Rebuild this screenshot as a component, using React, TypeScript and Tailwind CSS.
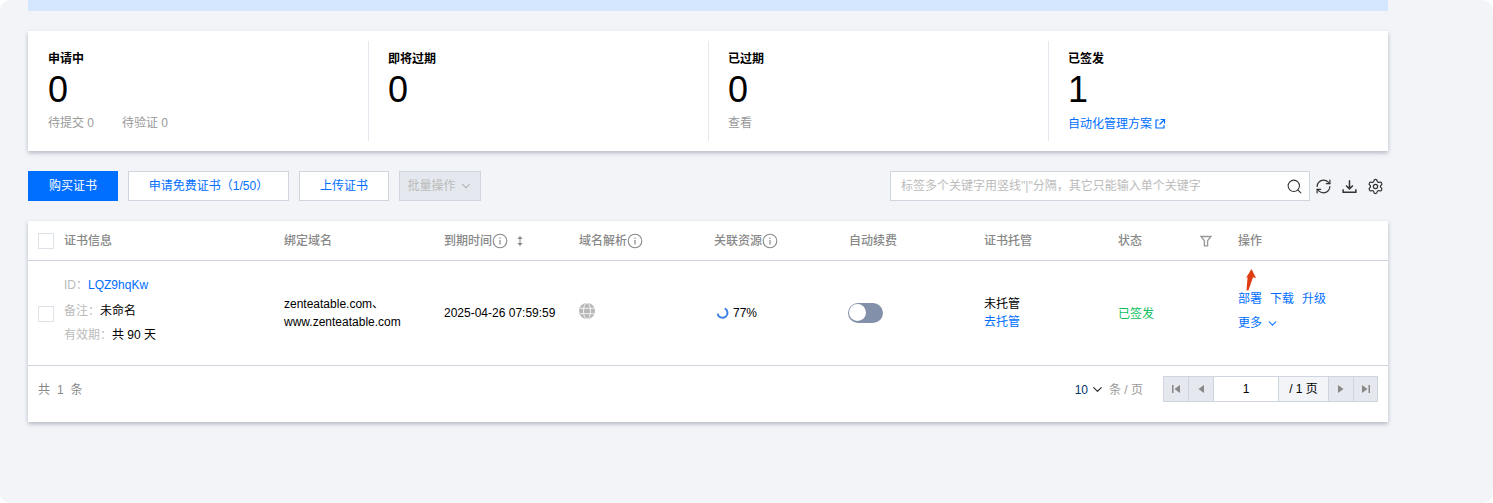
import React from "react";
import { ChevronDown, Search, RefreshCw, Settings } from "lucide-react";

const FONT = "font-['Liberation_Sans','Noto_Sans_CJK_SC',sans-serif]";
const GRID = "grid grid-cols-[246px_160px_135px_135px_135px_135px_134px_120px_160px]";

function Info() {
  return (
    <svg width="16" height="16" viewBox="0 0 16 16" fill="none" className="shrink-0">
      <circle cx="8" cy="8" r="6.8" stroke="#888888" strokeWidth="1.1" />
      <rect x="7.4" y="7" width="1.2" height="4.5" fill="#888888" />
      <rect x="7.4" y="4.5" width="1.2" height="1.3" fill="#888888" />
    </svg>
  );
}

function Stat({ title, value, children, first }: { title: string; value: string; children: React.ReactNode; first?: boolean }) {
  return (
    <div className={`h-[100px] ${first ? "pl-5" : "pl-[19px] border-l border-[#e5e8ee]"}`}>
      <div className="mt-[9px] text-xs leading-[18px] font-bold text-black">{title}</div>
      <div className="text-[36px] leading-[44px] text-black">{value}</div>
      <div className="mt-[1px] text-xs leading-[20px] text-[#999999] flex">{children}</div>
    </div>
  );
}

function HeadCell({ children, info }: { children: React.ReactNode; info?: boolean }) {
  return (
    <div className="px-[10px] flex items-center text-xs font-medium text-[#888888]">
      <span>{children}</span>
      {info && <Info />}
    </div>
  );
}

function PageBtn({ d, className }: { d: string; className: string }) {
  return (
    <div className={`h-full bg-[#e5e8ee] flex items-center justify-center ${className}`}>
      <svg width="12" height="12" viewBox="0 0 12 12" fill="#888888"><path d={d} /></svg>
    </div>
  );
}

export default function App() {
  return (
    <div className={`${FONT} w-[1493px] h-[503px] bg-white overflow-hidden`}>
      <div className="h-full rounded-[10px] bg-[#f2f4f8] pl-7 w-[1493px]">
        <div className="w-[1360px]">
          <div className="h-[11px] bg-[#d5e7ff]" />

          <div className="mt-5 h-[120px] bg-white py-[10px] grid grid-cols-4 shadow-[0_2px_4px_rgba(54,58,80,0.32)]">
            <Stat title="申请中" value="0" first>
              <span className="w-[74px]">待提交 0</span>
              <span>待验证 0</span>
            </Stat>
            <Stat title="即将过期" value="0"><span /></Stat>
            <Stat title="已过期" value="0"><span>查看</span></Stat>
            <Stat title="已签发" value="1">
              <span className="text-[#006eff] flex items-center gap-[2px] mt-[1px]">
                自动化管理方案
                <svg width="12" height="12" viewBox="0 0 12 12" fill="none" stroke="#006eff" strokeWidth="1.2">
                  <path d="M5 2H2v8h8V7" />
                  <path d="M6.5 1.5h4v4M10.5 1.5 5.5 6.5" />
                </svg>
              </span>
            </Stat>
          </div>

          <div className="mt-5 h-[30px] flex items-center text-xs">
            <button className="w-[90px] h-[30px] bg-[#006eff] text-white">购买证书</button>
            <button className="ml-[10px] w-[161px] h-[30px] bg-white border border-[#cfd5de] text-[#006eff]">申请免费证书（1/50）</button>
            <button className="ml-[10px] w-[90px] h-[30px] bg-white border border-[#cfd5de] text-[#006eff]">上传证书</button>
            <button className="ml-[10px] w-[82px] h-[30px] bg-[#e5e8ee] border border-[#cfd5de] text-[#bbbbbb] flex items-center justify-center gap-[3px]">
              批量操作
              <ChevronDown size={14} strokeWidth={1.8} color="#aaaaaa" />
            </button>
            <div className="ml-auto w-[420px] h-[30px] bg-white border border-[#cfd5de] flex items-center pl-[10px] pr-[6px]">
              <span className="flex-1 text-[#bbbbbb]">标签多个关键字用竖线"|"分隔，其它只能输入单个关键字</span>
              <Search size={17} strokeWidth={1.5} color="#333333" />
            </div>
            <div className="ml-[5px] mr-[4px] flex items-center gap-[9px]">
              <RefreshCw size={17} strokeWidth={1.7} color="#333333" />
              <svg width="17" height="17" viewBox="0 0 16 16" fill="none" stroke="#333333" strokeWidth="1.4">
                <path d="M8 2v8M4.8 7 8 10.2 11.2 7" />
                <path d="M2 10.5v3h12v-3" />
              </svg>
              <Settings size={17} strokeWidth={1.7} color="#333333" />
            </div>
          </div>

          <div className="mt-5 h-[201px] bg-white shadow-[0_2px_4px_rgba(54,58,80,0.32)] relative">
            <div className={`${GRID} h-10 border-b border-[#cfd5de]`}>
              <div className="px-[10px] flex items-center gap-[10px] text-xs font-medium text-[#888888]">
                <span className="w-4 h-4 border border-[#dde1e8] bg-white" />
                <span>证书信息</span>
              </div>
              <HeadCell>绑定域名</HeadCell>
              <div className="px-[10px] flex items-center text-xs font-medium text-[#888888]">
                <span>到期时间</span>
                <Info />
                <svg width="8" height="12" viewBox="0 0 8 12" fill="#888888" className="ml-[8px]">
                  <path d="M4 1 6.6 4H1.4ZM4 11 1.4 8h5.2ZM3.5 3h1v6h-1Z" />
                </svg>
              </div>
              <HeadCell info>域名解析</HeadCell>
              <HeadCell info>关联资源</HeadCell>
              <HeadCell>自动续费</HeadCell>
              <HeadCell>证书托管</HeadCell>
              <div className="px-[10px] flex items-center justify-between text-xs font-medium text-[#888888]">
                <span>状态</span>
                <svg width="14" height="14" viewBox="0 0 14 14" fill="none" stroke="#999999" strokeWidth="1.3" className="mr-[5px]">
                  <path d="M2 2.5h10L8.6 6.8v5H5.4V6.8Z" />
                </svg>
              </div>
              <HeadCell>操作</HeadCell>
            </div>

            <div className={`${GRID} h-[105px] border-b border-[#cfd5de] text-xs text-black`}>
              <div className="px-[10px] flex items-center gap-[10px]">
                <span className="w-4 h-4 border border-[#dde1e8] bg-white mt-[2px] shrink-0" />
                <div className="leading-[24px] mt-[-7px]">
                  <div className="h-[25px]"><span className="text-[#bbbbbb]">ID：</span><span className="text-[#006eff]">LQZ9hqKw</span></div>
                  <div className="h-[25px] leading-[26px]"><span className="text-[#bbbbbb]">备注：</span>未命名</div>
                  <div className="h-[24px] leading-[24px]"><span className="text-[#bbbbbb]">有效期：</span>共 90 天</div>
                </div>
              </div>
              <div className="px-[10px] flex flex-col justify-center leading-[18px] pb-[1px]">
                <div>zenteatable.com、</div>
                <div>www.zenteatable.com</div>
              </div>
              <div className="px-[10px] flex items-center mb-[1px]">2025-04-26 07:59:59</div>
              <div className="px-[10px] flex items-center pb-[4px]">
                <svg width="16" height="16" viewBox="0 0 16 16">
                  <circle cx="8" cy="8" r="8" fill="#b8b8b8" />
                  <g fill="none" stroke="#ffffff" strokeWidth="0.8">
                    <ellipse cx="8" cy="8" rx="3.5" ry="8" />
                    <path d="M0.7 5.3h14.6M0.7 10.7h14.6" />
                  </g>
                </svg>
              </div>
              <div className="px-[10px] flex items-center gap-[4px]">
                <svg width="14" height="14" viewBox="0 0 14 14" fill="none" className="ml-[2px] mr-[-1px]">
                  <path d="M1.6 7.6A5 5 0 1 0 8.7 2.3" stroke="#3c7fe8" strokeWidth="2" />
                </svg>
                <span>77%</span>
              </div>
              <div className="pl-[9px] pr-[10px] flex items-center pb-[1px]">
                <span className="w-[35px] h-5 rounded-full bg-[#8291a9] flex items-center pl-[1px]">
                  <span className="w-[17px] h-[17px] rounded-full bg-white" />
                </span>
              </div>
              <div className="px-[10px] flex flex-col justify-center leading-[18px] pb-[1px]">
                <div>未托管</div>
                <div className="text-[#006eff]">去托管</div>
              </div>
              <div className="px-[10px] pt-[1px] flex items-center text-[#0abf5b]">已签发</div>
              <div className="px-[10px] pt-[29px] text-[#006eff] leading-[18px]">
                <div className="flex gap-2"><span>部署</span><span>下载</span><span>升级</span></div>
                <div className="flex items-center gap-[4px] mt-[6px]">更多 <ChevronDown size={13} strokeWidth={1.9} color="#006eff" /></div>
              </div>
            </div>

            <div className="absolute left-[1217px] top-[48px]">
              <svg width="12" height="22" viewBox="0 0 12 22">
                <path d="M6.5 0 11 9 8 8.2 3.4 21.5 1.5 21.2 2.6 8 0.8 9.2Z" fill="#de3d12" />
              </svg>
            </div>

            <div className="h-[55px] pl-[10px] flex items-center text-xs pb-[10px]">
              <span className="text-[#888888] tracking-[1.8px] mt-[2px]">共 1 条</span>
              <div className="ml-auto mr-5 mt-[2px] flex items-center">
                <span className="text-[#00366d]">10</span>
                <ChevronDown size={15} strokeWidth={2} color="#333333" className="ml-[2px]" />
                <span className="ml-[4px] text-[#999999]">条 / 页</span>
              </div>
              <div className="w-[215px] h-[26px] mr-[10px] border border-[#cfd5de] flex items-stretch">
                <PageBtn className="w-[24px]" d="M2 2h1.5v8H2ZM10 2v8L4.5 6Z" />
                <PageBtn className="w-[25px] border-l border-[#cfd5de]" d="M9 2v8L3.5 6Z" />
                <div className="w-[65px] bg-white border-l border-[#cfd5de] flex items-center justify-center text-black">1</div>
                <div className="w-[50px] bg-[#f2f4f8] border-l border-[#cfd5de] flex items-center justify-center text-black">/ 1 页</div>
                <PageBtn className="w-[25px] border-l border-[#cfd5de]" d="M3 2v8L8.5 6Z" />
                <PageBtn className="w-[24px] border-l border-[#cfd5de]" d="M2 2v8L7.5 6ZM8.5 2H10v8H8.5Z" />
              </div>
            </div>
          </div>
        </div>
      </div>
    </div>
  );
}
